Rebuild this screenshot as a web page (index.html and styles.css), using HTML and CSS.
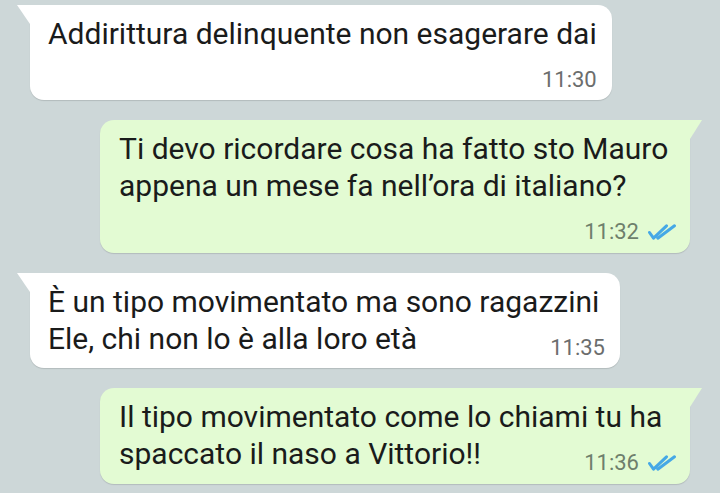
FILE: index.html
```html
<!DOCTYPE html>
<html lang="it">
<head>
  <meta charset="UTF-8" />
  <title>Chat</title>
  <link rel="stylesheet" href="styles.css">
</head>
<body>
  <div class="chat">
    <div class="msg in solo">Addirittura delinquente non esagerare dai<span class="meta">11:30</span></div>

    <div class="msg out">Ti devo ricordare cosa ha fatto sto Mauro appena un mese fa nell’ora di italiano?<span class="meta">11:32
        <svg class="ticks" viewBox="0 0 28 16" width="28" height="16"><path d="M1.5 8.5 L5.5 14.2 L18.5 1.8 M9.8 14.2 L26.5 1.8" /></svg></span></div>

    <div class="msg in">È un tipo movimentato ma sono ragazzini Ele, chi non lo è alla loro età<span class="meta">11:35</span></div>

    <div class="msg out">Il tipo movimentato come lo chiami tu ha spaccato il naso a Vittorio!!<span class="meta">11:36
        <svg class="ticks" viewBox="0 0 28 16" width="28" height="16"><path d="M1.5 8.5 L5.5 14.2 L18.5 1.8 M9.8 14.2 L26.5 1.8" /></svg></span></div>
  </div>
</body>
</html>
```

FILE: styles.css
```css
body {
  margin: 0;
  background: #cdd7d8;
  color: #1a1b1b;
  font-family: Roboto, "Noto Sans", sans-serif;
}

.chat {
  display: flex;
  flex-direction: column;
  gap: 20px;
  padding: 5px 30px;
  height: 493px;
  box-sizing: border-box;
  overflow: hidden;
}

.msg {
  position: relative;
  display: flow-root;
  max-width: 590px;
  box-sizing: border-box;
  padding: 10px 15px 6px 18px;
  font-size: 30px;
  line-height: 37px;
  border-radius: 14px;
  box-shadow: 0 1px 1px rgba(0, 0, 0, 0.13);
}

.msg::before {
  content: "";
  position: absolute;
  top: 0;
  width: 13px;
  height: 19px;
  background: inherit;
}

.msg.in {
  align-self: flex-start;
  background: #fff;
  border-top-left-radius: 0;
}
.msg.in::before {
  left: -13px;
  clip-path: polygon(0 0, 100% 0, 100% 100%);
}

.msg.out {
  align-self: flex-end;
  background: #e3fbd3;
  border-top-right-radius: 0;
  padding-left: 19px;
  padding-right: 14px;
  padding-bottom: 7px;
}
.msg.out::before {
  right: -12px;
  width: 12px;
  clip-path: polygon(0 0, 100% 0, 0 100%);
}

.meta {
  float: right;
  display: flex;
  align-items: center;
  gap: 9px;
  margin: 14px 0 0 20px;
  font-size: 22px;
  line-height: 28px;
  color: #6b6d6d;
}
.msg.out .meta { color: #6e7f6c; }

/* single full line: time sits on its own row, bubble hugs the text */
.msg.solo .meta {
  float: none;
  justify-content: flex-end;
  margin-left: 0;
}

.ticks {
  fill: none;
  stroke: #45a8e6;
  stroke-width: 3;
  stroke-linecap: round;
  stroke-linejoin: round;
}
```
